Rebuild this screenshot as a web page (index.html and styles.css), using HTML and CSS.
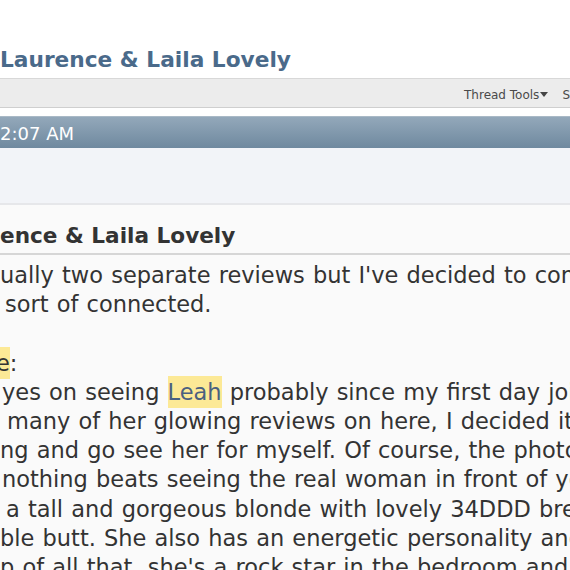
FILE: index.html
```html
<!DOCTYPE html>
<html>
<head>
<meta charset="utf-8">
<link rel="stylesheet" href="styles.css">
</head>
<body>
<div class="page">
  <h1 class="thread-title">Laurence &amp; Laila Lovely</h1>
  <div class="toolbar">
    <span class="tool">Thread Tools<span class="caret"></span></span>
    <span class="tool">S</span>
  </div>
  <div class="post">
    <div class="post-head">2:07 AM</div>
    <div class="userinfo"></div>
    <div class="post-body">
      <h2 class="post-title">ence &amp; Laila Lovely</h2>
      <div class="content">
        <div class="line">ually two separate reviews but I've decided to combine them</div>
        <div class="line in-5">sort of connected.</div>
        <div class="line">&nbsp;</div>
        <div class="line out-4"><span class="hl">e</span>:</div>
        <div class="line in-2">yes on seeing <span class="hl link">Leah</span> probably since my first day joined</div>
        <div class="line in-7">many of her glowing reviews on here, I decided it was</div>
        <div class="line">ng and go see her for myself. Of course, the photos</div>
        <div class="line in-2">nothing beats seeing the real woman in front of you</div>
        <div class="line in-6">a tall and gorgeous blonde with lovely 34DDD breasts</div>
        <div class="line">ble butt. She also has an energetic personality and</div>
        <div class="line">p of all that, she's a rock star in the bedroom and</div>
      </div>
    </div>
  </div>
</div>
</body>
</html>
```
FILE: styles.css
```css
html, body {
  margin: 0;
  padding: 0;
  background: #ffffff;
  overflow: hidden;
}
.page {
  width: 570px;
  height: 570px;
  overflow: hidden;
  font-family: "DejaVu Sans", Verdana, sans-serif;
}
.thread-title {
  margin: 0;
  padding: 44px 0 0 0;
  height: 34px;
  font-size: 21.7px;
  line-height: 31px;
  font-weight: bold;
  color: #4a6a8a;
  white-space: nowrap;
}
.toolbar {
  padding-top: 3px;
  box-sizing: content-box;
  height: 25px;
  border-top: 1px solid #d8d8d8;
  border-bottom: 1px solid #cfcfcf;
  background: #ececec;
  display: flex;
  justify-content: flex-end;
  align-items: center;
  gap: 14px;
  font-size: 12px;
  color: #4a4a4a;
  margin-right: 0;
}
.tool {
  display: inline-flex;
  align-items: center;
  white-space: nowrap;
}
.caret {
  display: inline-block;
  width: 0;
  height: 0;
  border-left: 4px solid transparent;
  border-right: 4px solid transparent;
  border-top: 5px solid #444;
  margin-left: 1px;
}
.post {
  margin-top: 8px;
}
.post-head {
  height: 31px;
  line-height: 33px;
  background: linear-gradient(#93a8ba, #6f899f);
  border-top: 1px solid #a9b9c6;
  color: #ffffff;
  font-size: 18px;
  padding-left: 0;
  white-space: nowrap;
}
.userinfo {
  height: 55px;
  background: #f2f4f8;
  border-bottom: 2px solid #e6e7ea;
}
.post-body {
  background: #fafafa;
  color: #333333;
}
.post-title {
  margin: 0;
  padding: 16px 0 0 0;
  height: 32px;
  line-height: 29px;
  font-size: 21.6px;
  font-weight: bold;
  color: #333333;
  border-bottom: 2px solid #d6d6d6;
  white-space: nowrap;
}
.content {
  padding-top: 6px;
  font-size: 22.5px;
  line-height: 29.2px;
  word-spacing: 1px;
}
.line {
  white-space: nowrap;
}
.in-2 { padding-left: 2px; }
.in-5 { padding-left: 5px; }
.in-6 { padding-left: 6px; }
.in-7 { padding-left: 7px; }
.out-4 { margin-left: -4px; }
.hl {
  background: #fce996;
  padding: 3px 0;
}
.link {
  color: #4a6080;
}
```
